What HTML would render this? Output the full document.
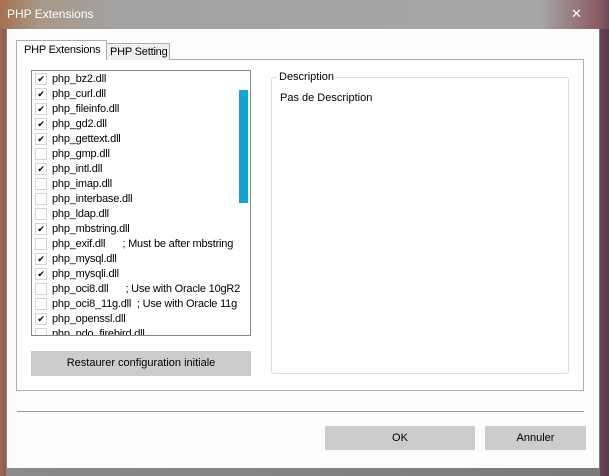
<!DOCTYPE html>
<html><head><style>
*{margin:0;padding:0;box-sizing:border-box}
body{width:609px;height:476px;overflow:hidden;position:relative;font-family:"Liberation Sans",Tahoma,sans-serif;font-size:11px;color:#000;
background:linear-gradient(90deg,#9a6a55 0,#8e5a4c 6px,#8a8a8a 6px,#7a7a7a 600px,#6e4258 600px,#5a3a50 609px)}
.title{position:absolute;left:0;top:0;width:609px;height:29px;background:linear-gradient(90deg,#a5704e 0,#a89888 40px,#a2a2a2 120px,#a6a6a6 540px,#8a5a62 600px,#6a4a5a 609px)}
.title span{position:absolute;left:7px;top:7px;color:#fff;font-size:12px}
.title b{position:absolute;left:571px;top:6px;color:#fff;font-weight:normal;font-size:13px}
.client{position:absolute;left:7px;top:29px;width:592px;height:439px;background:#fcfcfc}
.a{position:absolute;white-space:nowrap}
.panel{left:16px;top:59px;width:568px;height:332px;border:1px solid #adadad;background:#fff}
.tab1{left:16px;top:40px;width:91px;height:20px;border:1px solid #adadad;border-bottom:none;background:#fff;padding:3px 0 0 7px;z-index:2;letter-spacing:-0.2px}
.tab2{left:106px;top:43px;width:64px;height:17px;border:1px solid #adadad;border-bottom:none;background:#f0f0f0;padding:2px 0 0 3px;letter-spacing:-0.2px}
.list{left:31px;top:70px;width:220px;height:266px;border:1px solid #828790;background:#fff;overflow:hidden}
.row{position:absolute;left:3px;height:15px;white-space:nowrap;letter-spacing:-0.2px}
.cb{position:absolute;left:0;top:1px;width:12px;height:12px;border:1px solid #d4d4d4;background:#fff;font-size:9px;line-height:10px;text-align:center}
.row .t{position:absolute;left:17px;top:1px}
.sb{left:239px;top:90px;width:9px;height:113px;background:#0fa4d6}
.btn{background:#cccccc;text-align:center;font-size:11px}
.grp{left:271px;top:77px;width:298px;height:297px;border:1px solid #dcdcdc;border-radius:3px}
.sep{left:17px;top:411px;width:567px;height:1px;background:#a0a0a0}
</style></head><body>
<div class="title"><span>PHP Extensions</span><b>✕</b></div>
<div class="client"></div>
<div class="a panel"></div>
<div class="a tab2">PHP Setting</div>
<div class="a tab1">PHP Extensions</div>
<div class="a list">
<div class="row" style="top:1px"><div class="cb">✔</div><span class="t">php_bz2.dll</span></div>
<div class="row" style="top:16px"><div class="cb">✔</div><span class="t">php_curl.dll</span></div>
<div class="row" style="top:31px"><div class="cb">✔</div><span class="t">php_fileinfo.dll</span></div>
<div class="row" style="top:46px"><div class="cb">✔</div><span class="t">php_gd2.dll</span></div>
<div class="row" style="top:61px"><div class="cb">✔</div><span class="t">php_gettext.dll</span></div>
<div class="row" style="top:76px"><div class="cb"></div><span class="t">php_gmp.dll</span></div>
<div class="row" style="top:91px"><div class="cb">✔</div><span class="t">php_intl.dll</span></div>
<div class="row" style="top:106px"><div class="cb"></div><span class="t">php_imap.dll</span></div>
<div class="row" style="top:121px"><div class="cb"></div><span class="t">php_interbase.dll</span></div>
<div class="row" style="top:136px"><div class="cb"></div><span class="t">php_ldap.dll</span></div>
<div class="row" style="top:151px"><div class="cb">✔</div><span class="t">php_mbstring.dll</span></div>
<div class="row" style="top:166px"><div class="cb"></div><span class="t">php_exif.dll&nbsp;&nbsp;&nbsp;&nbsp;&nbsp; ; Must be after mbstring</span></div>
<div class="row" style="top:181px"><div class="cb">✔</div><span class="t">php_mysql.dll</span></div>
<div class="row" style="top:196px"><div class="cb">✔</div><span class="t">php_mysqli.dll</span></div>
<div class="row" style="top:211px"><div class="cb"></div><span class="t">php_oci8.dll&nbsp;&nbsp;&nbsp;&nbsp;&nbsp; ; Use with Oracle 10gR2</span></div>
<div class="row" style="top:226px"><div class="cb"></div><span class="t">php_oci8_11g.dll&nbsp; ; Use with Oracle 11g</span></div>
<div class="row" style="top:241px"><div class="cb">✔</div><span class="t">php_openssl.dll</span></div>
<div class="row" style="top:256px"><div class="cb"></div><span class="t">php_pdo_firebird.dll</span></div>
</div>
<div class="a sb"></div>
<div class="a btn" style="left:31px;top:351px;width:220px;height:25px;line-height:25px">Restaurer configuration initiale</div>
<div class="a grp"></div>
<div class="a" style="left:277px;top:71px;background:#fff;padding:0 2px">Description</div>
<div class="a" style="left:280px;top:92px">Pas de Description</div>
<div class="a sep"></div>
<div class="a btn" style="left:325px;top:426px;width:150px;height:24px;line-height:24px">OK</div>
<div class="a btn" style="left:485px;top:426px;width:101px;height:24px;line-height:24px">Annuler</div>
</body></html>
